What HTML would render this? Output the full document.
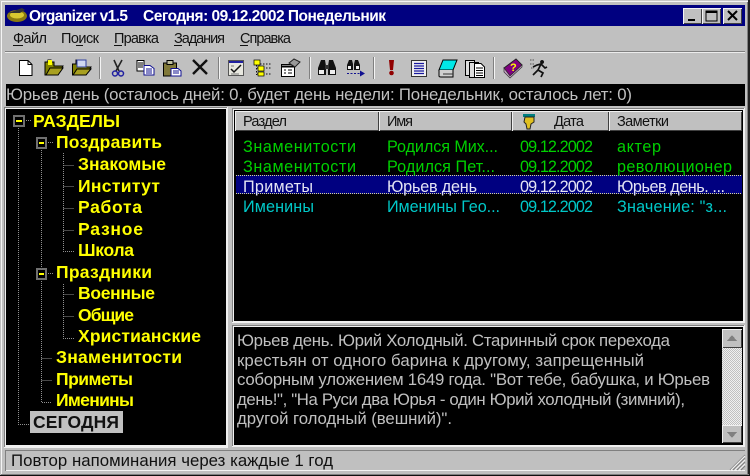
<!DOCTYPE html>
<html><head><meta charset="utf-8"><style>
html,body{margin:0;padding:0;background:#c0c0c0;width:750px;height:476px;overflow:hidden}
svg{display:block;filter:blur(0.35px)}
text{font-family:"Liberation Sans","Noto Sans CJK SC",sans-serif;font-size:16px;white-space:pre}
.t{font-weight:bold;font-size:17.5px;fill:#ffff00}
.m{fill:#111;font-size:14.5px}
.h{fill:#111;font-size:14.5px}
.g{fill:#00d000;font-size:16.2px}
.c{fill:#00c8c8;font-size:16.2px}
.w{fill:#e4e4f4;font-size:16.2px}
.e{fill:#c0c0c0;font-size:16.8px}
</style></head><body>
<svg width="750" height="476" viewBox="0 0 750 476" xmlns="http://www.w3.org/2000/svg" shape-rendering="crispEdges">
<defs>
<pattern id="dith" width="2" height="2" patternUnits="userSpaceOnUse"><rect width="2" height="2" fill="#f0f0f0"/><rect width="1" height="1" fill="#c0c0c0"/><rect x="1" y="1" width="1" height="1" fill="#c0c0c0"/></pattern>
</defs>
<!-- window frame -->
<rect width="750" height="476" fill="#c0c0c0"/>
<rect x="0" y="0" width="750" height="1" fill="#c8c8c8"/>
<rect x="1" y="1" width="748" height="1" fill="#f4f4f4"/>
<rect x="1" y="1" width="1" height="473" fill="#f4f4f4"/>
<rect x="748" y="0" width="2" height="476" fill="#222"/>
<rect x="747" y="2" width="1" height="472" fill="#808080"/>
<rect x="0" y="475" width="750" height="1" fill="#111"/>
<rect x="1" y="474" width="748" height="1" fill="#808080"/>
<!-- title bar -->
<rect x="5" y="5" width="740" height="21" fill="#000080"/>
<g shape-rendering="auto">
<ellipse cx="17" cy="16" rx="10" ry="6" fill="#8a7a10"/>
<ellipse cx="17" cy="15" rx="7" ry="3.5" fill="#d8c830"/>
<path d="M8 13 L14 11 L22 8 L25 10 L20 13" fill="#333"/>
<text x="29" y="21" fill="#fff" style="font-weight:bold;font-size:15.5px" textLength="99" lengthAdjust="spacing">Organizer v1.5</text>
<text x="143" y="21" fill="#fff" style="font-weight:bold;font-size:15.5px" textLength="243" lengthAdjust="spacing">Сегодня: 09.12.2002 Понедельник</text>
</g>
<!-- window buttons -->
<g>
<rect x="683" y="8" width="19" height="16" fill="#f4f4f4"/><rect x="684" y="9" width="18" height="15" fill="#404040"/><rect x="684" y="9" width="17" height="14" fill="#c0c0c0"/>
<rect x="688" y="19" width="7" height="2" fill="#000"/>
<rect x="702" y="8" width="19" height="16" fill="#f4f4f4"/><rect x="703" y="9" width="18" height="15" fill="#404040"/><rect x="703" y="9" width="17" height="14" fill="#c0c0c0"/>
<rect x="706" y="11" width="11" height="10" fill="none" stroke="#000"/><rect x="706" y="11" width="11" height="2" fill="#000"/>
<rect x="723" y="8" width="19" height="16" fill="#f4f4f4"/><rect x="724" y="9" width="18" height="15" fill="#404040"/><rect x="724" y="9" width="17" height="14" fill="#c0c0c0"/>
<path d="M728 11 L737 20 M737 11 L728 20" stroke="#000" stroke-width="2" shape-rendering="auto"/>
</g>
<!-- menu -->
<g shape-rendering="auto">
<text class="m" x="13" y="43" textLength="34" lengthAdjust="spacing">Файл</text>
<text class="m" x="61" y="43" textLength="38" lengthAdjust="spacing">Поиск</text>
<text class="m" x="114" y="43" textLength="45" lengthAdjust="spacing">Правка</text>
<text class="m" x="174" y="43" textLength="51" lengthAdjust="spacing">Задания</text>
<text class="m" x="240" y="43" textLength="51" lengthAdjust="spacing">Справка</text>
</g>
<rect x="13" y="45" width="10" height="1" fill="#111"/><rect x="76" y="45" width="7" height="1" fill="#111"/><rect x="114" y="45" width="8" height="1" fill="#111"/><rect x="174" y="45" width="8" height="1" fill="#111"/><rect x="240" y="45" width="8" height="1" fill="#111"/>
<rect x="5" y="51" width="740" height="1" fill="#808080"/>
<rect x="5" y="52" width="740" height="1" fill="#ececec"/>
<!-- toolbar separators -->
<g fill="#808080"><rect x="99" y="57" width="1" height="22"/><rect x="218" y="57" width="1" height="22"/><rect x="309" y="57" width="1" height="22"/><rect x="373" y="57" width="1" height="22"/><rect x="493" y="57" width="1" height="22"/></g>
<g fill="#f4f4f4"><rect x="100" y="57" width="1" height="22"/><rect x="219" y="57" width="1" height="22"/><rect x="310" y="57" width="1" height="22"/><rect x="374" y="57" width="1" height="22"/><rect x="494" y="57" width="1" height="22"/></g>
<!-- toolbar icons -->
<g shape-rendering="auto">
<path d="M19.5 60.5 H28 L32 64.5 V75.5 H19.5 Z" fill="#fff" stroke="#000"/><path d="M28 60.5 V64.5 H32" fill="none" stroke="#000"/>
<path d="M45 75 V62 H48 V60 H51 V62 H54 V66 H63 L58 75 Z" fill="#808000" stroke="#000"/><path d="M48 60 h4 v5 h-4z" fill="#ff0"/><path d="M46 75 L50 68 H63 L58 75 Z" fill="#a8a020" stroke="#000"/>
<path d="M72.500 75 V64 H76 V60 H85 V67 H91 L86 75 Z" fill="#808000" stroke="#000"/><rect x="77" y="60" width="9" height="7" fill="#cfd8f0" stroke="#3040a0"/><path d="M73 75 L77 69 H91 L86 75 Z" fill="#a8a020" stroke="#000"/>
<path d="M114 60 L119 71 M122 60 L116 71" stroke="#222" stroke-width="1.6" fill="none"/><circle cx="115" cy="73.500" r="2.500" fill="none" stroke="#2020a0" stroke-width="1.500"/><circle cx="121" cy="73.500" r="2.500" fill="none" stroke="#2020a0" stroke-width="1.500"/>
<path d="M137 60.500 H144 V71 H137 Z" fill="#fff" stroke="#000"/><path d="M138 63 h5 M138 65 h5 M138 67 h5" stroke="#000"/><path d="M144 65.500 H150 L154 68.500 V75 H144 Z" fill="#fff" stroke="#101090"/><path d="M146 69 h6 M146 71 h6 M146 73 h6" stroke="#101090"/>
<rect x="163.500" y="63" width="13" height="13" fill="#807838" stroke="#000"/><rect x="167" y="60.500" width="6" height="4" fill="#c0c0a0" stroke="#000"/><path d="M171 68.500 H178 L181 71 V76 H171 Z" fill="#fff" stroke="#101090"/><path d="M173 71 h6 M173 73 h6" stroke="#101090"/>
<path d="M193 60 L207 74 M207 60 L193 74" stroke="#111" stroke-width="2.400"/>
<rect x="228.500" y="60.500" width="15" height="15" fill="#e8e8e0" stroke="#555"/><rect x="229" y="61" width="14" height="2" fill="#2020a0"/><path d="M231 69 L234 72 L241 65" stroke="#111" stroke-width="1.500" fill="none"/><path d="M231 66 h3 M231 74 h8" stroke="#777"/>
<path d="M256.500 62 V75 M257 68 H272 M257 74 H272 M257 64 H272" stroke="#111" stroke-dasharray="1.500 1.500" fill="none"/><rect x="254" y="60" width="6" height="5" fill="#ff0" stroke="#000" stroke-width=".7"/><rect x="258" y="66" width="6" height="5" fill="#ff0" stroke="#000" stroke-width=".7"/><rect x="258" y="72" width="6" height="4" fill="#ff0" stroke="#000" stroke-width=".7"/>
<rect x="281.500" y="64.500" width="13" height="12" fill="#fff" stroke="#000"/><path d="M282 66.500 h12" stroke="#000" stroke-width="2"/><path d="M284 70 h2 M288 70 h4 M284 73 h2 M288 73 h4" stroke="#000"/><path d="M289 63 L294 59 L300 62 L295 67 Z" fill="#999" stroke="#222"/>
<path d="M321 60 h4 l1 6 v9 h-8 v-7 z M329 60 h4 l3 8 v7 h-8 v-9 z" fill="#111"/><rect x="325" y="65" width="4" height="4" fill="#333"/><rect x="319" y="70" width="5" height="4" fill="#eee"/><rect x="330" y="70" width="5" height="4" fill="#eee"/>
<path d="M349 60 h3 l1 4 v6 h-6 v-5 z M355 60 h3 l2 5 v5 h-6 v-6 z" fill="#111"/><rect x="348" y="66" width="3" height="3" fill="#eee"/><rect x="356" y="66" width="3" height="3" fill="#eee"/>
<path d="M347 73.500 H360" stroke="#101090" stroke-dasharray="2 1.500"/><path d="M360 70.500 L365 73.500 L360 76.500 Z" fill="#101090"/>
<path d="M389 60 H394 L393 70 H390 Z" fill="#900000"/><circle cx="391.500" cy="73" r="2.300" fill="#900000"/>
<rect x="411.500" y="60.500" width="15" height="16" fill="#f0f0f0" stroke="#333"/><path d="M414 63.500 h10 M414 66 h10 M414 68.500 h10 M414 71 h10 M414 73.500 h10" stroke="#1818a0" stroke-width="1.200"/>
<path d="M443 60 H457 L453 70 H439 Z" fill="#00e8e8" stroke="#000"/><path d="M439 70 V76 Q439 77 441 77 H453 V70" fill="#d0d0d0" stroke="#000"/><path d="M443 74 H453" stroke="#333"/>
<rect x="465.500" y="60.500" width="9" height="15" fill="#ddd" stroke="#000"/><rect x="469.500" y="62.500" width="9" height="15" fill="#ddd" stroke="#000"/><path d="M474.500 63.500 H481 L484.500 67 V77.500 H474.500 Z" fill="#fff" stroke="#000"/><path d="M476 68 h7 M476 70.500 h7 M476 73 h7 M476 75.500 h7" stroke="#000"/>
<path d="M504 68 L516 59 L522 65 L510 76 Z" fill="#800080" stroke="#222"/><path d="M504 68 L504 72 L510 78 L522 67 V65 L510 76 Z" fill="#c8a0c8" stroke="#333" stroke-width=".7"/><text x="510" y="71" style="font-size:11px;font-weight:bold" fill="#ff0">?</text>
<path d="M542 60 a2 2 0 1 0 .1 0Z" fill="#111"/><path d="M541 64 L538 70 L543 73 L541 77 M538 70 L533 75 M533 67 L537 65 L541 64 L545 68 L547 67" stroke="#111" stroke-width="1.700" fill="none"/><path d="M530 60 h5 M530 64 h4 M531 68 h3" stroke="#555" stroke-dasharray="1.500 1"/>
</g>
<!-- info strip -->
<rect x="6" y="84" width="739" height="22" fill="#000"/>
<g shape-rendering="auto"><text class="e" x="6" y="100" textLength="626" lengthAdjust="spacing">Юрьев день (осталось дней: 0, будет день недели: Понедельник, осталось лет: 0)</text></g>
<!-- tree panel -->
<rect x="4" y="107" width="224" height="341" fill="#f0f0f0"/>
<rect x="4" y="107" width="223" height="1" fill="#808080"/><rect x="4" y="107" width="1" height="340" fill="#808080"/>
<rect x="6" y="109" width="220" height="336" fill="#000"/>
<g fill="none" stroke="#909090" stroke-dasharray="1 1">
<path d="M18.500 126 V424.500 H30"/>
<path d="M24 120.500 H31"/>
<path d="M41.500 148 V268 M41.500 279 V402.500 H52 M41.500 358.500 H52 M41.500 380.500 H52"/>
<path d="M46 142.500 H53 M46 273.500 H53"/>
<path d="M63.500 153 V251.500 H74 M63.500 165.500 H74 M63.500 186.500 H74 M63.500 208.500 H74 M63.500 230.500 H74"/>
<path d="M63.500 284 V338.500 H74 M63.500 294.500 H74 M63.500 316.500 H74"/>
</g>
<g>
<rect x="14" y="116" width="10" height="10" fill="#000" stroke="#707070" stroke-width="2"/><rect x="16" y="120" width="6" height="2" fill="#ff0"/>
<rect x="37" y="138" width="9" height="10" fill="#000" stroke="#707070" stroke-width="2"/><rect x="39" y="142" width="5" height="2" fill="#ff0"/>
<rect x="37" y="269" width="9" height="10" fill="#000" stroke="#707070" stroke-width="2"/><rect x="39" y="273" width="5" height="2" fill="#ff0"/>
</g>
<rect x="30" y="411" width="93" height="22" fill="#c0c0c0"/>
<g shape-rendering="auto">
<text x="33" y="127" fill="#ffff00" style="font-size:17.5px;font-weight:bold" textLength="87" lengthAdjust="spacing">РАЗДЕЛЫ</text>
<text class="t" x="56" y="148" textLength="106" lengthAdjust="spacing">Поздравить</text>
<text class="t" x="78" y="170" textLength="88" lengthAdjust="spacing">Знакомые</text>
<text class="t" x="78" y="192" textLength="82" lengthAdjust="spacing">Институт</text>
<text class="t" x="78" y="213" textLength="64" lengthAdjust="spacing">Работа</text>
<text class="t" x="78" y="235" textLength="65" lengthAdjust="spacing">Разное</text>
<text class="t" x="78" y="256" textLength="56" lengthAdjust="spacing">Школа</text>
<text class="t" x="56" y="278" textLength="96" lengthAdjust="spacing">Праздники</text>
<text class="t" x="78" y="299" textLength="77" lengthAdjust="spacing">Военные</text>
<text class="t" x="78" y="321" textLength="56" lengthAdjust="spacing">Общие</text>
<text class="t" x="78" y="342" textLength="123" lengthAdjust="spacing">Христианские</text>
<text class="t" x="56" y="363" textLength="126" lengthAdjust="spacing">Знаменитости</text>
<text class="t" x="56" y="385" textLength="77" lengthAdjust="spacing">Приметы</text>
<text class="t" x="56" y="406" textLength="78" lengthAdjust="spacing">Именины</text>
<text x="33" y="428" fill="#111" style="font-size:17.5px;font-weight:bold" textLength="86" lengthAdjust="spacing">СЕГОДНЯ</text>
</g>
<!-- list panel -->
<rect x="232" y="108" width="513" height="215" fill="#f0f0f0"/>
<rect x="232" y="108" width="512" height="1" fill="#808080"/><rect x="232" y="108" width="1" height="214" fill="#808080"/>
<rect x="234" y="110" width="509" height="211" fill="#000"/>
<g>
<rect x="235" y="111" width="144" height="20" fill="#f0f0f0"/><rect x="236" y="112" width="143" height="19" fill="#404040"/><rect x="236" y="112" width="142" height="18" fill="#c0c0c0"/>
<rect x="379" y="111" width="133" height="20" fill="#f0f0f0"/><rect x="380" y="112" width="132" height="19" fill="#404040"/><rect x="380" y="112" width="131" height="18" fill="#c0c0c0"/>
<rect x="512" y="111" width="97" height="20" fill="#f0f0f0"/><rect x="513" y="112" width="96" height="19" fill="#404040"/><rect x="513" y="112" width="95" height="18" fill="#c0c0c0"/>
<rect x="609" y="111" width="133" height="20" fill="#f0f0f0"/><rect x="610" y="112" width="132" height="19" fill="#404040"/><rect x="610" y="112" width="131" height="18" fill="#c0c0c0"/>
</g>
<g shape-rendering="auto">
<rect x="523" y="114" width="12" height="3" fill="#008080"/>
<path d="M525 117 H534 V122 L531 124 L530 129 H527 L526 124 L524 122 Z" fill="#e0c020" stroke="#222" stroke-width="1"/>
<text class="h" x="243" y="126" textLength="44" lengthAdjust="spacing">Раздел</text>
<text class="h" x="387" y="126" textLength="26" lengthAdjust="spacing">Имя</text>
<text class="h" x="554" y="126" textLength="30" lengthAdjust="spacing">Дата</text>
<text class="h" x="617" y="126" textLength="52" lengthAdjust="spacing">Заметки</text>
</g>
<!-- selected row -->
<rect x="236" y="175" width="506" height="19" fill="#000080"/>
<path d="M236 175.500 H742 M236 193.500 H742" stroke="#d8d890" stroke-dasharray="1 1" fill="none"/>
<g shape-rendering="auto">
<text class="g" x="243" y="152" textLength="113" lengthAdjust="spacing">Знаменитости</text>
<text class="g" x="387" y="152" textLength="111" lengthAdjust="spacing">Родился Мих...</text>
<text class="g" x="520" y="152" textLength="73" lengthAdjust="spacing">09.12.2002</text>
<text class="g" x="617" y="152" textLength="44" lengthAdjust="spacing">актер</text>
<text class="g" x="243" y="172" textLength="113" lengthAdjust="spacing">Знаменитости</text>
<text class="g" x="387" y="172" textLength="108" lengthAdjust="spacing">Родился Пет...</text>
<text class="g" x="520" y="172" textLength="73" lengthAdjust="spacing">09.12.2002</text>
<text class="g" x="617" y="172" textLength="115" lengthAdjust="spacing">революционер</text>
<text class="w" x="243" y="192" textLength="70" lengthAdjust="spacing">Приметы</text>
<text class="w" x="387" y="192" textLength="90" lengthAdjust="spacing">Юрьев день</text>
<text class="w" x="520" y="192" textLength="73" lengthAdjust="spacing">09.12.2002</text>
<text class="w" x="617" y="192" textLength="108" lengthAdjust="spacing">Юрьев день. ...</text>
<text class="c" x="243" y="212" textLength="71" lengthAdjust="spacing">Именины</text>
<text class="c" x="387" y="212" textLength="113" lengthAdjust="spacing">Именины Гео...</text>
<text class="c" x="520" y="212" textLength="73" lengthAdjust="spacing">09.12.2002</text>
<text class="c" x="617" y="212" textLength="110" lengthAdjust="spacing">Значение: "з...</text>
</g>
<!-- memo -->
<rect x="232" y="325" width="513" height="122" fill="#f0f0f0"/>
<rect x="232" y="325" width="512" height="1" fill="#808080"/><rect x="232" y="325" width="1" height="121" fill="#808080"/>
<rect x="234" y="327" width="509" height="118" fill="#000"/>
<g shape-rendering="auto">
<text class="e" x="237" y="346" textLength="433" lengthAdjust="spacing">Юрьев день. Юрий Холодный. Старинный срок перехода</text>
<text class="e" x="237" y="366" textLength="407" lengthAdjust="spacing">крестьян от одного барина к другому, запрещенный</text>
<text class="e" x="237" y="385" textLength="473" lengthAdjust="spacing">соборным уложением 1649 года. "Вот тебе, бабушка, и Юрьев</text>
<text class="e" x="237" y="405" textLength="448" lengthAdjust="spacing">день!", "На Руси два Юрья - один Юрий холодный (зимний),</text>
<text class="e" x="237" y="424" textLength="215" lengthAdjust="spacing">другой голодный (вешний)".</text>
</g>
<!-- scrollbar -->
<rect x="722" y="329" width="20" height="114" fill="url(#dith)"/>
<rect x="722" y="329" width="20" height="19" fill="#f0f0f0"/><rect x="723" y="330" width="19" height="18" fill="#404040"/><rect x="723" y="330" width="18" height="17" fill="#c0c0c0"/>
<path d="M732 335 L727 341 H737 Z" fill="#808080"/>
<rect x="722" y="425" width="20" height="18" fill="#f0f0f0"/><rect x="723" y="426" width="19" height="17" fill="#404040"/><rect x="723" y="426" width="18" height="16" fill="#c0c0c0"/>
<path d="M727 432 H737 L732 438 Z" fill="#808080"/>
<!-- status bar -->
<rect x="5" y="450" width="740" height="1" fill="#808080"/>
<rect x="5" y="470" width="740" height="1" fill="#f4f4f4"/>
<rect x="5" y="450" width="1" height="21" fill="#808080"/>
<g shape-rendering="auto">
<text x="11" y="466" fill="#111" style="font-size:16.8px" textLength="322" lengthAdjust="spacing">Повтор напоминания через каждые 1 год</text>
<path d="M730 470 L745 455 M733 470 L745 458 M737 470 L745 462 M741 470 L745 466" stroke="#808080" fill="none"/>
<path d="M731 470 L745 456 M735 470 L745 460 M739 470 L745 464" stroke="#f4f4f4" fill="none"/>
</g>
</svg>
</body></html>
